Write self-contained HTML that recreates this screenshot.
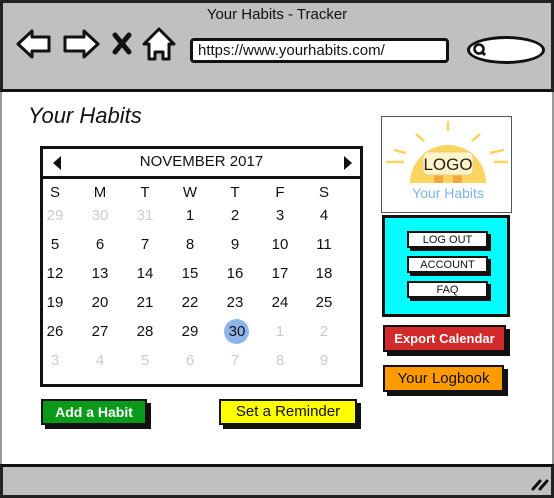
<!DOCTYPE html>
<html><head><meta charset="utf-8"><style>
*{margin:0;padding:0;box-sizing:border-box}
body{width:554px;height:498px;position:relative;background:#fff;font-family:"Liberation Sans",sans-serif;overflow:hidden;color:#111}
.a{position:absolute}
.top{left:0;top:0;width:554px;height:92px;background:#c0c0c0;border:3px solid #222;border-bottom:3px solid #111}
.bot{left:0;top:464px;width:554px;height:34px;background:#c0c0c0;border:3px solid #222;border-top:3px solid #111}
.lside{left:0;top:92px;width:2px;height:372px;background:#999}
.rside{left:552px;top:92px;width:2px;height:372px;background:#999}
.cal{left:40px;top:146px;width:323px;height:241px;border:3px solid #111}
.d{position:absolute;font-size:15px;width:30px;text-align:center}
.g{color:#ccc}
.btn{position:absolute;border:2px solid #111;box-shadow:4px 4px 0 #111;font-size:15px;text-align:center}
.sb{position:absolute;left:407px;width:81px;height:17px;background:#fff;border:2px solid #111;box-shadow:3px 3px 0 #111;font-size:11px;text-align:center;line-height:14px}
</style></head><body>
<div class="a top"></div>
<div class="a" style="left:0;top:6px;width:554px;text-align:center;font-size:15px">Your Habits - Tracker</div>
<svg class="a" style="left:14px;top:26px" width="175" height="38" viewBox="0 0 175 38">
<path d="M4 18 L18 5 L18 11 L35 11 L35 25 L18 25 L18 31 Z" fill="#fff" stroke="#111" stroke-width="3" stroke-linejoin="round"/>
<path d="M84 18 L70 5 L70 11 L51 11 L51 25 L70 25 L70 31 Z" fill="#fff" stroke="#111" stroke-width="3" stroke-linejoin="round"/>
<path d="M101 9 L115 26 M115 9 L101 26" stroke="#111" stroke-width="5" stroke-linecap="round"/>
<path d="M145 3 L130 18 L135 18 L135 33 L141 33 L141 26 L149 26 L149 33 L155 33 L155 18 L160 18 Z" fill="#fff" stroke="#111" stroke-width="3" stroke-linejoin="round"/>
</svg>
<div class="a" style="left:190px;top:38px;width:259px;height:25px;background:#fff;border:3px solid #111;border-radius:4px;font-size:15px;padding-left:5px;line-height:19px">https://www.yourhabits.com/</div>
<div class="a" style="left:467px;top:36px;width:78px;height:28px;background:#fff;border:3px solid #111;border-radius:50%"></div>
<svg class="a" style="left:472px;top:42px" width="16" height="16"><circle cx="7" cy="7" r="4.5" fill="none" stroke="#111" stroke-width="2.5"/><path d="M10 10 L13 13" stroke="#111" stroke-width="3"/></svg>
<div class="a lside"></div><div class="a rside"></div>
<div class="a" style="left:28px;top:103px;font-size:22px;font-style:italic">Your Habits</div>
<div class="a cal">
<div class="a" style="left:0;top:0;width:317px;height:30px;border-bottom:3px solid #111"></div>
<svg class="a" style="left:8px;top:6px" width="12" height="16"><path d="M10 1 L2 8 L10 15 Z" fill="#111"/></svg>
<svg class="a" style="left:299px;top:6px" width="12" height="16"><path d="M2 1 L10 8 L2 15 Z" fill="#111"/></svg>
<div class="a" style="left:0;top:4px;width:317px;text-align:center;font-size:15px">NOVEMBER 2017</div>
<div class="a" style="left:181px;top:170px;width:25px;height:25px;border-radius:50%;background:#8fb4ea"></div>
<div class="d" style="left:-3px;top:35px">S</div><div class="d" style="left:42px;top:35px">M</div><div class="d" style="left:87px;top:35px">T</div><div class="d" style="left:132px;top:35px">W</div><div class="d" style="left:177px;top:35px">T</div><div class="d" style="left:222px;top:35px">F</div><div class="d" style="left:266px;top:35px">S</div>
<div class="d g" style="left:-3px;top:58px">29</div><div class="d g" style="left:42px;top:58px">30</div><div class="d g" style="left:87px;top:58px">31</div><div class="d" style="left:132px;top:58px">1</div><div class="d" style="left:177px;top:58px">2</div><div class="d" style="left:222px;top:58px">3</div><div class="d" style="left:266px;top:58px">4</div>
<div class="d" style="left:-3px;top:87px">5</div><div class="d" style="left:42px;top:87px">6</div><div class="d" style="left:87px;top:87px">7</div><div class="d" style="left:132px;top:87px">8</div><div class="d" style="left:177px;top:87px">9</div><div class="d" style="left:222px;top:87px">10</div><div class="d" style="left:266px;top:87px">11</div>
<div class="d" style="left:-3px;top:116px">12</div><div class="d" style="left:42px;top:116px">13</div><div class="d" style="left:87px;top:116px">14</div><div class="d" style="left:132px;top:116px">15</div><div class="d" style="left:177px;top:116px">16</div><div class="d" style="left:222px;top:116px">17</div><div class="d" style="left:266px;top:116px">18</div>
<div class="d" style="left:-3px;top:145px">19</div><div class="d" style="left:42px;top:145px">20</div><div class="d" style="left:87px;top:145px">21</div><div class="d" style="left:132px;top:145px">22</div><div class="d" style="left:177px;top:145px">23</div><div class="d" style="left:222px;top:145px">24</div><div class="d" style="left:266px;top:145px">25</div>
<div class="d" style="left:-3px;top:174px">26</div><div class="d" style="left:42px;top:174px">27</div><div class="d" style="left:87px;top:174px">28</div><div class="d" style="left:132px;top:174px">29</div><div class="d" style="left:179px;top:174px">30</div><div class="d g" style="left:222px;top:174px">1</div><div class="d g" style="left:266px;top:174px">2</div>
<div class="d g" style="left:-3px;top:203px">3</div><div class="d g" style="left:42px;top:203px">4</div><div class="d g" style="left:87px;top:203px">5</div><div class="d g" style="left:132px;top:203px">6</div><div class="d g" style="left:177px;top:203px">7</div><div class="d g" style="left:222px;top:203px">8</div><div class="d g" style="left:266px;top:203px">9</div>
</div>
<div class="btn" style="left:41px;top:399px;width:106px;height:26px;background:#0a9a1a;color:#fff;line-height:22px;font-weight:bold;font-size:14px">Add a Habit</div>
<div class="btn" style="left:219px;top:399px;width:138px;height:26px;background:#ffff00;line-height:22px">Set a Reminder</div>
<div class="a" style="left:381px;top:116px;width:131px;height:97px;border:1px solid #555;background:#fff"></div>
<svg class="a" style="left:382px;top:117px" width="129" height="95">
<g stroke="#fbd560" stroke-width="2.5"><path d="M66 14 V4 M42 24 L34 17 M90 24 L98 17 M24 36 L12 33 M108 36 L122 33 M4 45 H22 M112 45 H126"/></g>
<path d="M28 66 A38 38 0 0 1 104 66 Z" fill="#fbd560"/>
<rect x="52" y="57" width="9" height="9" fill="#f3a93a"/><rect x="71" y="57" width="9" height="9" fill="#f3a93a"/>
<rect x="41" y="35" width="50" height="23" rx="5" fill="#fff3c8" stroke="#e8cf88"/>
<text x="66" y="53" text-anchor="middle" font-family="Liberation Sans" font-size="17" fill="#222">LOGO</text>
<text x="66" y="81" text-anchor="middle" font-family="Liberation Sans" font-size="14" fill="#7fb3ec">Your Habits</text>
</svg>
<div class="a" style="left:382px;top:215px;width:128px;height:102px;background:#00ffff;border:3px solid #111"></div>
<div class="sb" style="top:231px">LOG OUT</div>
<div class="sb" style="top:256px">ACCOUNT</div>
<div class="sb" style="top:281px">FAQ</div>
<div class="btn" style="left:383px;top:325px;width:123px;height:27px;background:#d22a2a;color:#fff;font-size:13px;line-height:23px;font-weight:bold">Export Calendar</div>
<div class="btn" style="left:383px;top:365px;width:121px;height:27px;background:#ff9a00;font-size:15px;line-height:23px">Your Logbook</div>
<div class="a bot"></div>
<svg class="a" style="left:530px;top:476px" width="20" height="16"><path d="M3 13 L10 5 M10 13 L17 5" stroke="#111" stroke-width="3" stroke-linecap="round"/></svg>
</body></html>
